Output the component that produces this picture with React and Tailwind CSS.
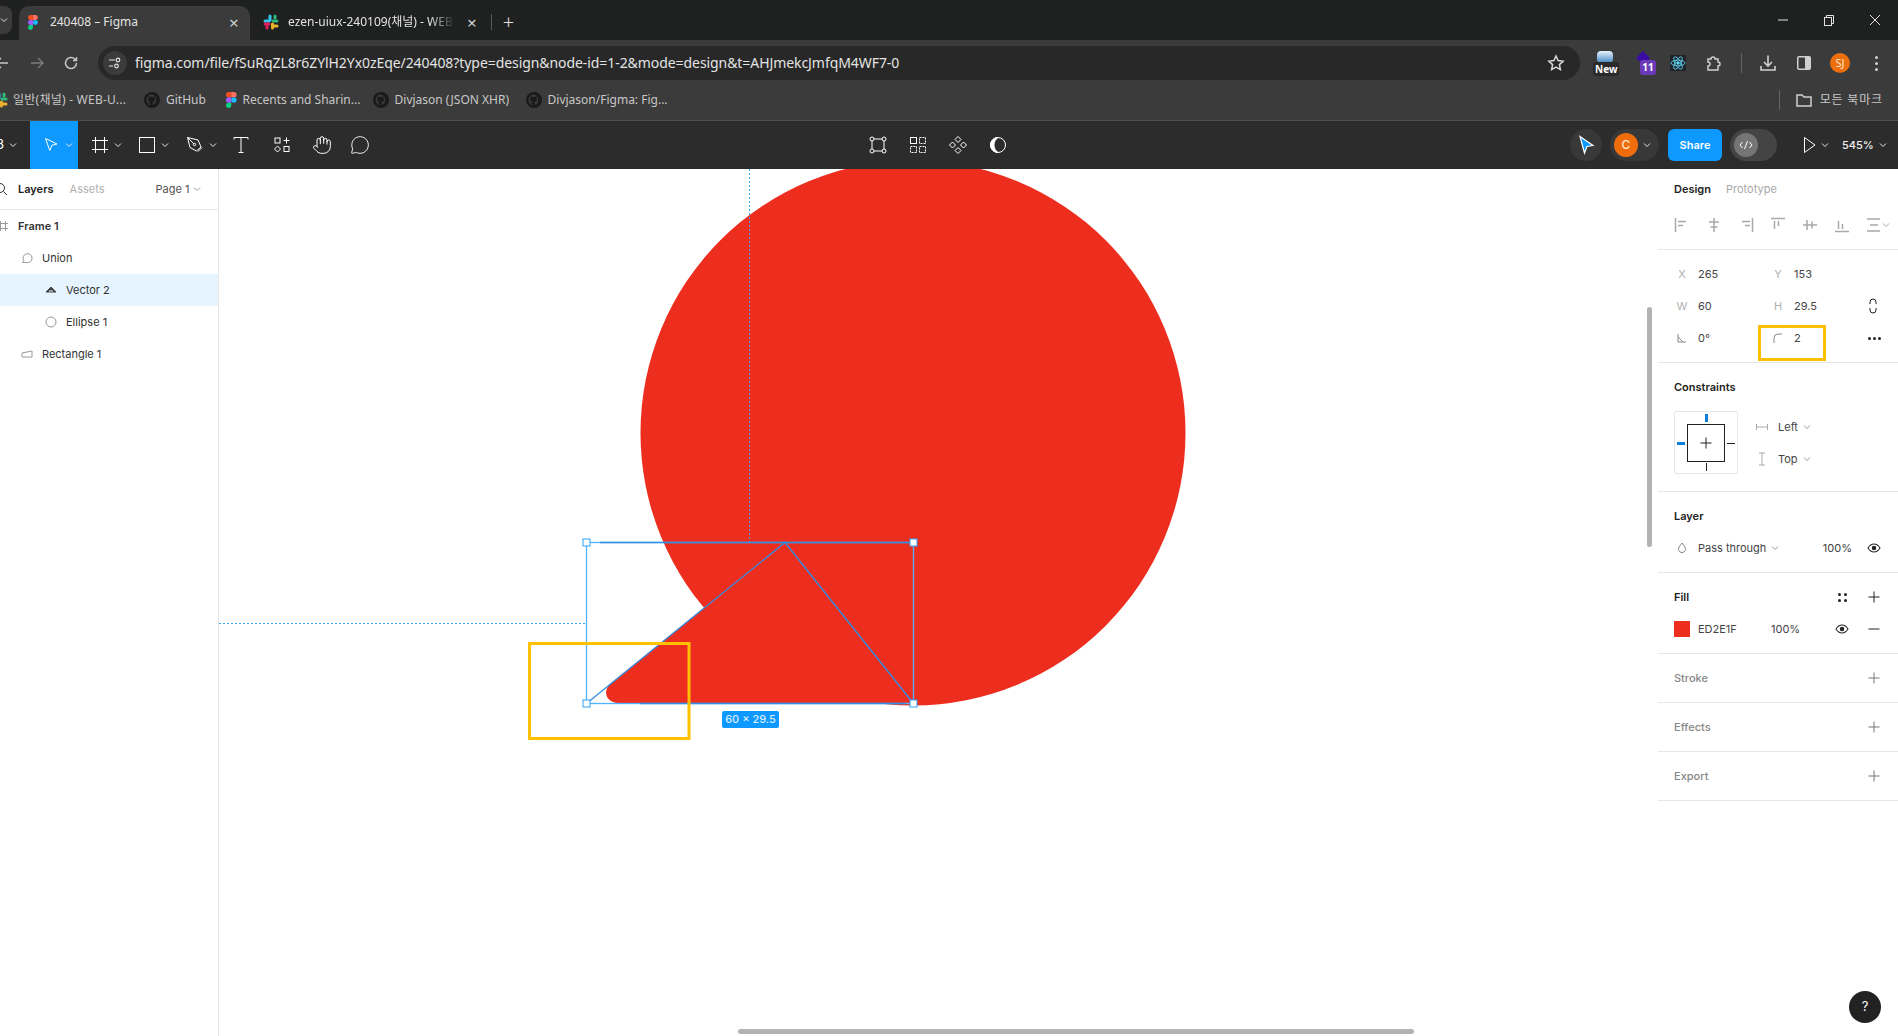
import React from 'react';
import { Hand, MessageCircle } from 'lucide-react';

const Chev = ({ className = 'text-[#e6e6e6]', size = 8 }) => (
  <svg width={size} height={size} viewBox="0 0 8 8" fill="none" stroke="currentColor" strokeWidth="1" className={className}>
    <path d="M1 2.5 L4 5.5 L7 2.5" />
  </svg>
);

const FigmaLogo = ({ h = 16 }) => (
  <svg width={h * 0.66} height={h} viewBox="0 0 12 18" className="shrink-0">
    <path d="M6 0H3a3 3 0 0 0 0 6h3z" fill="#f24e1e" />
    <path d="M6 0h3a3 3 0 0 1 0 6H6z" fill="#ff7262" />
    <path d="M6 6H3a3 3 0 0 0 0 6h3z" fill="#a259ff" />
    <circle cx="9" cy="9" r="3" fill="#1abcfe" />
    <path d="M6 12H3a3 3 0 1 0 3 3z" fill="#0acf83" />
  </svg>
);

const SlackLogo = () => (
  <svg width="16" height="16" viewBox="0 0 16 16" className="shrink-0">
    <rect x="5.5" y="0.5" width="3" height="7" rx="1.5" fill="#36c5f0" />
    <rect x="0.5" y="5.5" width="7" height="3" rx="1.5" fill="#36c5f0" />
    <rect x="8.5" y="5.5" width="7" height="3" rx="1.5" fill="#2eb67d" />
    <rect x="10.5" y="0.5" width="3" height="5" rx="1.5" fill="#2eb67d" />
    <rect x="8" y="8.5" width="3" height="7" rx="1.5" fill="#ecb22e" />
    <rect x="9" y="10.5" width="6.5" height="3" rx="1.5" fill="#ecb22e" />
    <rect x="0.5" y="8.5" width="7" height="3" rx="1.5" fill="#e01e5a" />
    <rect x="2.5" y="10.5" width="3" height="5" rx="1.5" fill="#e01e5a" />
  </svg>
);

const GithubDot = () => (
  <svg width="16" height="16" viewBox="0 0 16 16" className="shrink-0">
    <circle cx="8" cy="8" r="8" fill="#1a1a1a" />
    <path d="M8 2.5a5.5 5.5 0 0 0-1.7 10.7v-1.6c-1.6.3-2-.7-2-.7-.3-.6-.6-.8-.6-.8-.5-.3 0-.3 0-.3.6 0 .9.6.9.6.5.8 1.3.6 1.7.4 0-.4.2-.6.4-.8-1.3-.1-2.6-.6-2.6-2.7 0-.6.2-1.1.6-1.5-.1-.1-.3-.7 0-1.5 0 0 .5-.1 1.5.6a5 5 0 0 1 2.8 0c1-.7 1.5-.6 1.5-.6.3.8.1 1.4 0 1.5.4.4.6.9.6 1.5 0 2.1-1.3 2.6-2.6 2.7.2.2.4.5.4 1v1.9A5.5 5.5 0 0 0 8 2.5z" fill="#3b3b3b" />
  </svg>
);

const Slot = ({ w = 24, ml = 0, children }) => (
  <div className="flex h-full shrink-0 items-center justify-center" style={{ width: w, marginLeft: ml }}>
    {children}
  </div>
);

const Bookmark = ({ icon, label, w, ml }) => (
  <div className="flex shrink-0 items-center gap-[6px]" style={{ marginLeft: ml }}>
    {icon}
    <span className="whitespace-nowrap text-[12px] text-[#c7c7c7]" style={{ width: w }}>{label}</span>
  </div>
);

function TabBar() {
  return (
    <div className="flex h-10 items-end bg-[#1f2020] text-[12px] text-[#e3e3e3]">
      <div className="mb-[6px] flex h-[28px] w-[12px] shrink-0 items-center rounded-r-lg bg-[#3b3b3b]">
        <Chev />
      </div>
      <div className="ml-[7px] flex h-[34px] w-[231px] shrink-0 items-center rounded-t-[10px] bg-[#3b3b3b] pb-[2px] pl-[9px]">
        <FigmaLogo h={15} />
        <span className="ml-[12px] w-[160px] shrink-0">240408 – Figma</span>
        <span className="ml-[19px] text-[17px] leading-none text-[#d0d0d0]">×</span>
      </div>
      <div className="ml-[13px] flex h-[34px] w-[280px] shrink-0 items-center pb-[2px]">
        <SlackLogo />
        <span className="ml-[9px] w-[167px] shrink-0 overflow-hidden whitespace-nowrap [mask-image:linear-gradient(to_right,black_85%,transparent)]">ezen-uiux-240109(채널) - WEB</span>
        <span className="ml-[12px] text-[17px] leading-none text-[#d0d0d0]">×</span>
        <div className="ml-[14px] h-[16px] w-px bg-[#5a5a5a]" />
        <span className="ml-[11px] text-[20px] font-light leading-none text-[#e3e3e3]">+</span>
      </div>
      <div className="mb-[14px] ml-auto flex items-center text-[#e3e3e3]">
        <svg width="12" height="12" viewBox="0 0 12 12" stroke="currentColor" fill="none"><path d="M1 6h10" /></svg>
        <svg className="ml-[34px]" width="12" height="12" viewBox="0 0 12 12" stroke="currentColor" fill="none"><rect x="1.5" y="3.5" width="7" height="8" /><path d="M3.5 3.5v-2h7v8h-2" /></svg>
        <svg className="ml-[34px] mr-[17px]" width="12" height="12" viewBox="0 0 12 12" stroke="currentColor" fill="none"><path d="M1 1l10 10M11 1L1 11" /></svg>
      </div>
    </div>
  );
}

function AddressRow() {
  return (
    <div className="flex h-10 items-end bg-[#3b3b3b] text-[#c7c7c7]">
      <div className="flex h-[34px] w-full items-center">
        <Slot ml={-10}>
          <svg width="16" height="16" viewBox="0 0 16 16" fill="none" stroke="#c7c7c7" strokeWidth="1.4"><path d="M14 8H2M7 3L2 8l5 5" /></svg>
        </Slot>
        <Slot ml={11}>
          <svg width="16" height="16" viewBox="0 0 16 16" fill="none" stroke="#7d7d7d" strokeWidth="1.4"><path d="M2 8h12M9 3l5 5-5 5" /></svg>
        </Slot>
        <Slot ml={10}>
          <svg width="16" height="16" viewBox="0 0 16 16" fill="none" stroke="#c7c7c7" strokeWidth="1.5"><path d="M13.5 8A5.5 5.5 0 1 1 11.8 4L13.5 5.5M13.5 2v3.5H10" /></svg>
        </Slot>
        <div className="ml-[15px] flex h-[34px] w-[1482px] shrink-0 items-center rounded-full bg-[#282828] pl-[5px]">
          <div className="flex h-[24px] w-[24px] items-center justify-center rounded-full bg-[#3b3b3b]">
            <svg width="14" height="14" viewBox="0 0 14 14" fill="none" stroke="#e3e3e3" strokeWidth="1.2"><path d="M1 4h6M1 10h4" /><circle cx="10" cy="4" r="1.8" /><circle cx="8.5" cy="10" r="1.8" /></svg>
          </div>
          <span className="ml-[8px] whitespace-nowrap pb-[1px] text-[14px] tracking-[-0.005em] text-[#e3e3e3]">figma.com/file/fSuRqZL8r6ZYlH2Yx0zEqe/240408?type=design&amp;node-id=1-2&amp;mode=design&amp;t=AHJmekcJmfqM4WF7-0</span>
          <svg className="ml-auto mr-[15px]" width="18" height="18" viewBox="0 0 18 18" fill="none" stroke="#d8d8d8" strokeWidth="1.5"><path d="M9 2l2.1 4.6 5 .6-3.7 3.4 1 5L9 13.1 4.600 15.600l1-5L1.900 7.200l5-.6z" /></svg>
        </div>
        <Slot ml={13}>
          <div className="relative h-[24px] w-[24px]">
            <div className="absolute left-[4px] top-0 h-[12px] w-[16px] rounded-sm bg-gradient-to-b from-[#e9f2f9] to-[#3d87c4]" />
            <div className="absolute left-0 top-[11px] rounded-[3px] bg-[#2a2a2a] px-[2px] text-[10px] font-bold leading-[14px] text-white">New</div>
          </div>
        </Slot>
        <Slot ml={15}>
          <div className="relative h-[24px] w-[24px]">
            <svg className="absolute left-[3px] top-0" width="16" height="16" viewBox="0 0 16 16"><path d="M8 0l7 7-7 7-7-7z" fill="#3a0ca3" /></svg>
            <div className="absolute left-[8px] top-[9px] h-[15px] w-[16px] rounded-[3px] bg-[#6c3ab8] text-center text-[10px] font-bold leading-[15px] text-white">11</div>
          </div>
        </Slot>
        <Slot ml={10}>
          <svg width="16" height="16" viewBox="0 0 16 16" fill="none" stroke="#61dafb" strokeWidth="0.8" className="bg-[#20232a]">
            <circle cx="8" cy="8" r="1.3" fill="#61dafb" />
            <ellipse cx="8" cy="8" rx="7" ry="2.8" />
            <ellipse cx="8" cy="8" rx="7" ry="2.8" transform="rotate(60 8 8)" />
            <ellipse cx="8" cy="8" rx="7" ry="2.8" transform="rotate(120 8 8)" />
          </svg>
        </Slot>
        <Slot ml={12}>
          <svg width="18" height="18" viewBox="0 0 18 18" fill="none" stroke="#d0d0d0" strokeWidth="1.5"><path d="M3 5h3a2 2 0 0 1 4 0h3v3a2 2 0 0 1 0 4v4H3v-4a2 2 0 0 0 0-4z" /></svg>
        </Slot>
        <div className="ml-[15px] h-[20px] w-px shrink-0 bg-[#636363]" />
        <Slot ml={14}>
          <svg width="18" height="18" viewBox="0 0 18 18" fill="none" stroke="#d0d0d0" strokeWidth="1.6"><path d="M9 1.500v10M5 8l4 4 4-4M2 12v4h14v-4" /></svg>
        </Slot>
        <Slot ml={12}>
          <svg width="16" height="16" viewBox="0 0 16 16"><rect x="1" y="1" width="14" height="14" rx="2" fill="#d0d0d0" /><rect x="2.500" y="2.500" width="6.500" height="11" fill="#3b3b3b" /></svg>
        </Slot>
        <Slot ml={12}>
          <div className="flex h-[20px] w-[20px] items-center justify-center rounded-full bg-[#ec6f0b] text-[11px] text-[#fde6d0]">SJ</div>
        </Slot>
        <Slot ml={12}>
          <div className="flex flex-col gap-[3px]">
            <div className="h-[3px] w-[3px] rounded-full bg-[#d0d0d0]" />
            <div className="h-[3px] w-[3px] rounded-full bg-[#d0d0d0]" />
            <div className="h-[3px] w-[3px] rounded-full bg-[#d0d0d0]" />
          </div>
        </Slot>
      </div>
    </div>
  );
}

function BookmarkRow() {
  return (
    <div className="flex h-[41px] items-center overflow-hidden border-b border-[#4f4f4f] bg-[#3b3b3b]">
      <div className="-ml-[8px] flex items-center gap-[5px]">
        <SlackLogo />
        <span className="w-[114px] whitespace-nowrap text-[12px] tracking-[0.02em] text-[#c7c7c7]">일반(채널) - WEB-U...</span>
      </div>
      <Bookmark icon={<GithubDot />} label="GitHub" w={46} ml={17} />
      <Bookmark icon={<FigmaLogo h={16} />} label="Recents and Sharin..." w={116} ml={14} />
      <Bookmark icon={<GithubDot />} label="Divjason (JSON XHR)" w={120} ml={14} />
      <Bookmark icon={<GithubDot />} label="Divjason/Figma: Fig..." w={118} ml={11} />
      <div className="ml-auto h-[20px] w-px bg-[#636363]" />
      <svg className="ml-[15px]" width="18" height="18" viewBox="0 0 18 18" fill="none" stroke="#d0d0d0" strokeWidth="1.500"><path d="M2 4h5l2 2h7v9H2z" /></svg>
      <span className="ml-[7px] mr-[15px] text-[12px] tracking-[0.07em] text-[#c7c7c7]">모든 북마크</span>
    </div>
  );
}

const ToolIcon = ({ children }) => (
  <svg width="20" height="20" viewBox="0 0 20 20" fill="none" stroke="#fff" strokeWidth="1">{children}</svg>
);

const ToolWithChev = ({ children, pl = 12, active = false }) => (
  <div className={`flex h-full w-12 shrink-0 items-center ${active ? 'bg-[#0d99ff]' : ''}`} style={{ paddingLeft: pl }}>
    {children}
    <Chev className="ml-[4px] text-[#e6e6e6]" />
  </div>
);

function FigmaToolbar() {
  return (
    <div className="flex h-12 items-center bg-[#2c2c2c] text-[11px] text-white">
      <div className="flex h-full w-[30px] shrink-0 items-center overflow-hidden">
        <span className="-ml-[4px] w-[13px] text-[13px]">3</span>
        <Chev />
      </div>
      <ToolWithChev active pl={11}>
        <ToolIcon><path d="M4.500 3.500L16 9l-5.200 1.300L8.800 15.500z" /></ToolIcon>
      </ToolWithChev>
      <ToolWithChev pl={12}>
        <ToolIcon><path d="M5.500 2v16M14.500 2v16M2 5.500h16M2 14.500h16" /></ToolIcon>
      </ToolWithChev>
      <ToolWithChev pl={11}>
        <ToolIcon><rect x="2.500" y="2.500" width="15" height="15" /></ToolIcon>
      </ToolWithChev>
      <ToolWithChev pl={11}>
        <ToolIcon><path d="M2.500 2.500L13 5l3 7-4.500 4-6.500-3.500zM2.500 2.500L9 9M13 16.500l4-4" /><circle cx="9.500" cy="9.500" r="1.200" /></ToolIcon>
      </ToolWithChev>
      <Slot w={38}>
        <ToolIcon><path d="M3 4.500V2.500h14v2M10 2.500v15M7.500 17.500h5" /></ToolIcon>
      </Slot>
      <Slot w={44}>
        <ToolIcon><rect x="3" y="3" width="5" height="5" /><path d="M14.500 2.500v6M11.500 5.500h6" /><path d="M5.500 11l3 3-3 3-3-3z" /><rect x="12" y="11.500" width="5" height="5" /></ToolIcon>
      </Slot>
      <Slot w={35}>
        <Hand size={20} strokeWidth={1.2} color="#fff" />
      </Slot>
      <Slot w={41}>
        <MessageCircle size={20} strokeWidth={1.1} color="#fff" />
      </Slot>

      <Slot w={40} ml={478}>
        <ToolIcon><path d="M4 4h12v12H4z" /><circle cx="4" cy="4" r="2" fill="#2c2c2c" /><circle cx="16" cy="4" r="2" fill="#2c2c2c" /><circle cx="4" cy="16" r="2" fill="#2c2c2c" /><circle cx="16" cy="16" r="2" fill="#2c2c2c" /></ToolIcon>
      </Slot>
      <Slot w={40}>
        <ToolIcon><rect x="2.500" y="2.500" width="6" height="6" /><rect x="11.500" y="2.500" width="6" height="6" strokeDasharray="2 1" /><rect x="2.500" y="11.500" width="6" height="6" strokeDasharray="2 1" /><rect x="11.500" y="11.500" width="6" height="6" strokeDasharray="2 1" /></ToolIcon>
      </Slot>
      <Slot w={40}>
        <ToolIcon><path d="M10 1.500l3 3-3 3-3-3zM10 12.500l3 3-3 3-3-3zM4.500 7l3 3-3 3-3-3zM15.500 7l3 3-3 3-3-3z" /></ToolIcon>
      </Slot>
      <Slot w={40}>
        <svg width="20" height="20" viewBox="0 0 20 20" fill="none" stroke="#fff"><circle cx="10" cy="10" r="7.500" /><path d="M10 2.500a7.500 7.500 0 0 0 0 15 9 9 0 0 1 0-15z" fill="#fff" /></svg>
      </Slot>

      <div className="ml-[552px] flex h-8 w-8 shrink-0 items-center justify-center rounded-full bg-[#383838]">
        <svg width="18" height="20" viewBox="0 0 18 20"><path d="M3 1.500L16 10.500 10 11.500 7.500 18z" fill="#0d99ff" stroke="#fff" strokeWidth="1.200" /></svg>
      </div>
      <div className="ml-[8px] flex h-8 w-[49px] shrink-0 items-center rounded-full bg-[#383838] pl-[4px]">
        <div className="flex h-6 w-6 items-center justify-center rounded-full bg-[#ee6c0c] text-[12px] font-medium text-[#fde6d0]">C</div>
        <Chev className="ml-[5px] text-[#e6e6e6]" />
      </div>
      <div className="ml-[9px] flex h-8 w-[54px] shrink-0 items-center justify-center rounded-[6px] bg-[#0d99ff] font-semibold">Share</div>
      <div className="ml-[8px] flex h-8 w-[47px] shrink-0 items-center rounded-full bg-[#444] pl-[4px]">
        <div className="flex h-6 w-6 items-center justify-center rounded-full bg-[#757575]">
          <svg width="14" height="10" viewBox="0 0 14 10" fill="none" stroke="#fff"><path d="M3.500 2L1 5l2.500 3M10.500 2L13 5l-2.500 3M8.500 1l-3 8" /></svg>
        </div>
      </div>
      <Slot w={20} ml={22}>
        <svg width="16" height="18" viewBox="0 0 16 18" fill="none" stroke="#fff"><path d="M3.500 1.500L14 9 3.500 16.500z" /></svg>
      </Slot>
      <Chev className="ml-[2px] shrink-0 text-[#e6e6e6]" />
      <span className="ml-[13px] shrink-0 font-medium text-[#f0f0f0]">545%</span>
      <Chev className="ml-[5px] shrink-0 text-[#e6e6e6]" />
    </div>
  );
}

const LayerRow = ({ icon, label, indent, selected, bold }) => (
  <div className={`flex h-8 items-center ${selected ? 'bg-[#e5f4ff]' : ''}`}>
    <div className="flex w-[16px] shrink-0 items-center justify-center" style={{ marginLeft: indent - 23 }}>{icon}</div>
    <span className={`ml-[7px] text-[11px] text-[#333] ${bold ? 'font-semibold' : ''}`}>{label}</span>
  </div>
);

function LayersPanel() {
  return (
    <div className="w-[219px] shrink-0 overflow-hidden border-r border-[#e6e6e6] bg-white">
      <div className="flex h-[41px] items-center border-b border-[#e6e6e6] text-[11px]">
        <svg className="-ml-[7px] shrink-0" width="16" height="16" viewBox="0 0 16 16" fill="none" stroke="#333" strokeWidth="1"><circle cx="7" cy="7" r="4.500" /><path d="M10.500 10.500L14 14" /></svg>
        <span className="ml-[9px] font-semibold text-[#222]">Layers</span>
        <span className="ml-[16px] text-[#b0b0b0]">Assets</span>
        <span className="ml-[51px] text-[#555]">Page 1</span>
        <Chev className="ml-[4px] text-[#999]" />
      </div>
      <LayerRow
        indent={18}
        bold
        label="Frame 1"
        icon={<svg width="12" height="12" viewBox="0 0 12 12" fill="none" stroke="#999"><path d="M3.500 1v10M8.500 1v10M1 3.500h10M1 8.500h10" /></svg>}
      />
      <LayerRow
        indent={42}
        label="Union"
        icon={<svg width="12" height="12" viewBox="0 0 12 12" fill="none" stroke="#999"><path d="M1.500 10.500L2.800 8.600A4.500 4.500 0 1 1 5.500 10.500z" /></svg>}
      />
      <LayerRow
        indent={66}
        selected
        label="Vector 2"
        icon={<svg width="12" height="12" viewBox="0 0 12 12" fill="#444" stroke="#444"><path d="M6 3l-5 5h10z" /><path d="M4 7h4" stroke="#e5f4ff" /></svg>}
      />
      <LayerRow
        indent={66}
        label="Ellipse 1"
        icon={<svg width="12" height="12" viewBox="0 0 12 12" fill="none" stroke="#999"><circle cx="6" cy="6" r="5" /></svg>}
      />
      <LayerRow
        indent={42}
        label="Rectangle 1"
        icon={<svg width="12" height="12" viewBox="0 0 12 12" fill="none" stroke="#999"><path d="M1 5l10-2v6H1z" /></svg>}
      />
    </div>
  );
}

function Canvas() {
  return (
    <div className="relative min-w-0 flex-1 overflow-hidden bg-white">
      <svg className="absolute inset-0 h-full w-full" viewBox="219 169 1439 867" preserveAspectRatio="none" fill="none">
        <circle cx="913" cy="433" r="272.500" fill="#ed2e1f" />
        <path d="M785 542L913 703H618C607 703 602 692 610 684Z" fill="#ed2e1f" />
        <path d="M749.500 169V542" stroke="#3ba6f5" strokeDasharray="2 2" />
        <path d="M219 623.500H586" stroke="#3ba6f5" strokeDasharray="2 2" />
        <rect x="586.500" y="542.500" width="327" height="161" stroke="#4fb3ff" strokeWidth="1.300" />
        <path d="M586.500 703.500L785 542.500L913.500 703.500" stroke="#2f8fe6" strokeWidth="1.300" />
        <path d="M600 542.500H913M640 703.500H905" stroke="#2f8fe6" strokeWidth="1.300" />
        <rect x="529.500" y="643.500" width="159.500" height="95" stroke="#ffc000" strokeWidth="3" />
        <rect x="583" y="539" width="7" height="7" fill="#fff" stroke="#2ea3f7" />
        <rect x="910" y="539" width="7" height="7" fill="#fff" stroke="#2ea3f7" />
        <rect x="583" y="700" width="7" height="7" fill="#fff" stroke="#2ea3f7" />
        <rect x="910" y="700" width="7" height="7" fill="#fff" stroke="#2ea3f7" />
      </svg>
      <div className="absolute left-[503px] top-[542px] flex h-[17px] w-[57px] items-center justify-center rounded-[2px] bg-[#0d99ff] text-[11px] font-medium text-[#d8eeff]">60 × 29.5</div>
      <div className="absolute left-[1428px] top-[138px] h-[240px] w-[5px] rounded-full bg-[#b3b3b3]" />
      <div className="absolute bottom-[2px] left-[519px] h-[5px] w-[676px] rounded-full bg-[#b3b3b3]" />
    </div>
  );
}

const AlignIcon = ({ children }) => (
  <svg width="16" height="16" viewBox="0 0 16 16" fill="none" stroke="#a8a8a8">{children}</svg>
);

const Prop = ({ label, value, valueClass = '' }) => (
  <div className="flex h-8 w-[96px] shrink-0 items-center">
    <span className="flex w-[32px] shrink-0 justify-center text-[11px] text-[#b0b0b0]">{label}</span>
    <span className={`text-[11px] text-[#444] ${valueClass}`}>{value}</span>
  </div>
);

const SectionTitle = ({ children, muted }) => (
  <span className={`text-[11px] ${muted ? 'font-medium text-[#888]' : 'font-semibold text-[#222]'}`}>{children}</span>
);

const Eye = () => (
  <svg width="14" height="10" viewBox="0 0 14 10" fill="none" stroke="#222" strokeWidth="1.100">
    <path d="M1 5c1.500-2.500 3.500-4 6-4s4.500 1.500 6 4c-1.500 2.500-3.500 4-6 4S2.500 7.500 1 5z" />
    <circle cx="7" cy="5" r="1.700" fill="#222" />
  </svg>
);

const Plus = ({ color = '#222' }) => (
  <svg width="12" height="12" viewBox="0 0 12 12" fill="none" stroke={color}><path d="M6 0.500v11M0.500 6h11" /></svg>
);

const EmptySection = ({ title }) => (
  <div className="flex h-[49px] items-center justify-between border-b border-[#e6e6e6] pl-4 pr-[18px]">
    <SectionTitle muted>{title}</SectionTitle>
    <Plus color="#777" />
  </div>
);

function DesignPanel() {
  return (
    <div className="w-[240px] shrink-0 bg-white">
      <div className="flex h-[41px] items-center gap-[15px] pl-4 text-[11px]">
        <span className="font-semibold text-[#222]">Design</span>
        <span className="text-[#a8a8a8]">Prototype</span>
      </div>
      <div className="flex h-10 items-start border-b border-[#e6e6e6] pl-[16px]">
        <div className="mt-[7px] flex items-center gap-[16px]">
          <AlignIcon><path d="M1.500 1v14M4 4.500h8M4 8.500h5" strokeWidth="1.500" /></AlignIcon>
          <AlignIcon><path d="M8 1v14M3 5h10M4.500 10h7" strokeWidth="1.500" /></AlignIcon>
          <AlignIcon><path d="M14.500 1v14M4 4.500h8M7 8.500h5" strokeWidth="1.500" /></AlignIcon>
          <AlignIcon><path d="M1 1.500h14M4.500 4v8M8.500 4v5" strokeWidth="1.500" /></AlignIcon>
          <AlignIcon><path d="M1 8h14M5 3v10M10 4.500v7" strokeWidth="1.500" /></AlignIcon>
          <AlignIcon><path d="M1 14.500h14M4.500 4v8M8.500 7v5" strokeWidth="1.500" /></AlignIcon>
          <div className="flex items-center">
            <AlignIcon><path d="M1 2h13M1 14h13M4 8h8" strokeWidth="1.500" /></AlignIcon>
            <Chev className="text-[#a8a8a8]" />
          </div>
        </div>
      </div>
      <div className="h-[113px] border-b border-[#e6e6e6] pl-[8px] pt-[8px]">
        <div className="flex h-8 items-center">
          <Prop label="X" value="265" />
          <Prop label="Y" value="153" />
        </div>
        <div className="flex h-8 items-center">
          <Prop label="W" value="60" />
          <Prop label="H" value="29.5" />
          <svg className="ml-[10px]" width="10" height="16" viewBox="0 0 10 16" fill="none" stroke="#222"><path d="M2 6V4a3 3 0 0 1 6 0v2M2 10v2a3 3 0 0 0 6 0v-2" /></svg>
        </div>
        <div className="flex h-8 items-center">
          <Prop label={<svg width="10" height="10" viewBox="0 0 10 10" fill="none" stroke="#888"><path d="M1 1v8h8M1 4l5 5" /></svg>} value="0°" />
          <div className="relative">
            <Prop label={<svg width="10" height="10" viewBox="0 0 10 10" fill="none" stroke="#888"><path d="M1 10V5a4 4 0 0 1 4-4h4" /></svg>} value="2" />
            <div className="absolute left-[-4px] top-[3px] h-[36px] w-[68px] border-[3px] border-[#ffc000]" />
          </div>
          <div className="ml-[10px] flex gap-[2px]">
            <div className="h-[3px] w-[3px] rounded-full bg-[#222]" />
            <div className="h-[3px] w-[3px] rounded-full bg-[#222]" />
            <div className="h-[3px] w-[3px] rounded-full bg-[#222]" />
          </div>
        </div>
      </div>
      <div className="h-[129px] border-b border-[#e6e6e6] pl-4 pt-[8px]">
        <div className="flex h-8 items-center"><SectionTitle>Constraints</SectionTitle></div>
        <div className="mt-[8px] flex items-start">
          <div className="relative h-[63px] w-[64px] shrink-0 rounded-[2px] border border-[#e6e6e6]">
            <div className="absolute left-[12px] top-[12px] flex h-[38px] w-[38px] items-center justify-center border border-[#222]">
              <Plus />
            </div>
            <div className="absolute left-[30px] top-[2px] h-[8px] w-[3px] bg-[#0d7fdc]" />
            <div className="absolute left-[31px] bottom-[2px] h-[8px] w-px bg-[#222]" />
            <div className="absolute left-[2px] top-[30px] h-[3px] w-[8px] bg-[#0d7fdc]" />
            <div className="absolute right-[2px] top-[31px] h-px w-[8px] bg-[#222]" />
          </div>
          <div className="ml-[18px] text-[11px] text-[#444]">
            <div className="flex h-8 items-center">
              <svg width="12" height="12" viewBox="0 0 12 12" fill="none" stroke="#aaa"><path d="M0.500 3v6M11.500 3v6M1 6h10" /></svg>
              <span className="ml-[10px]">Left</span>
              <Chev className="ml-[5px] text-[#999]" />
            </div>
            <div className="flex h-8 items-center">
              <svg width="12" height="14" viewBox="0 0 12 14" fill="none" stroke="#aaa"><path d="M3 1h6M3 13h6M6 1v12" /></svg>
              <span className="ml-[10px]">Top</span>
              <Chev className="ml-[5px] text-[#999]" />
            </div>
          </div>
        </div>
      </div>
      <div className="h-[81px] border-b border-[#e6e6e6] pl-4 pr-[17px] pt-[8px]">
        <div className="flex h-8 items-center"><SectionTitle>Layer</SectionTitle></div>
        <div className="flex h-8 items-center text-[11px] text-[#444]">
          <svg className="ml-[3px]" width="10" height="12" viewBox="0 0 10 12" fill="none" stroke="#888"><path d="M5 1L8 5a3.600 3.600 0 1 1-6 0z" /></svg>
          <span className="ml-[11px]">Pass through</span>
          <Chev className="ml-[5px] text-[#999]" />
          <span className="ml-auto mr-[15px]">100%</span>
          <Eye />
        </div>
      </div>
      <div className="h-[81px] border-b border-[#e6e6e6] pl-4 pr-[18px] pt-[8px]">
        <div className="flex h-8 items-center">
          <SectionTitle>Fill</SectionTitle>
          <div className="ml-auto mr-[21px] grid grid-cols-2 gap-x-[3px] gap-y-[3px]">
            <div className="h-[3px] w-[3px] rounded-full bg-[#222]" />
            <div className="h-[3px] w-[3px] rounded-full bg-[#222]" />
            <div className="h-[3px] w-[3px] rounded-full bg-[#222]" />
            <div className="h-[3px] w-[3px] rounded-full bg-[#222]" />
          </div>
          <Plus />
        </div>
        <div className="flex h-8 items-center text-[11px] text-[#444]">
          <div className="h-4 w-4 shrink-0 bg-[#ed2e1f]" />
          <span className="ml-[8px] w-[73px]">ED2E1F</span>
          <span>100%</span>
          <div className="ml-auto mr-[19px]"><Eye /></div>
          <svg width="12" height="12" viewBox="0 0 12 12" fill="none" stroke="#222"><path d="M0.500 6h11" /></svg>
        </div>
      </div>
      <EmptySection title="Stroke" />
      <EmptySection title="Effects" />
      <EmptySection title="Export" />
    </div>
  );
}

export default function App() {
  return (
    <div className="relative flex h-screen w-full flex-col overflow-hidden bg-white font-[Inter,sans-serif]">
      <div className="font-['Noto_Sans','Noto_Sans_CJK_KR',sans-serif]">
        <TabBar />
        <AddressRow />
        <BookmarkRow />
      </div>
      <FigmaToolbar />
      <div className="flex min-h-0 flex-1">
        <LayersPanel />
        <Canvas />
        <DesignPanel />
      </div>
      <div className="absolute bottom-[13px] right-[17px] flex h-8 w-8 items-center justify-center rounded-full bg-[#222] text-[13px] text-white">?</div>
    </div>
  );
}
